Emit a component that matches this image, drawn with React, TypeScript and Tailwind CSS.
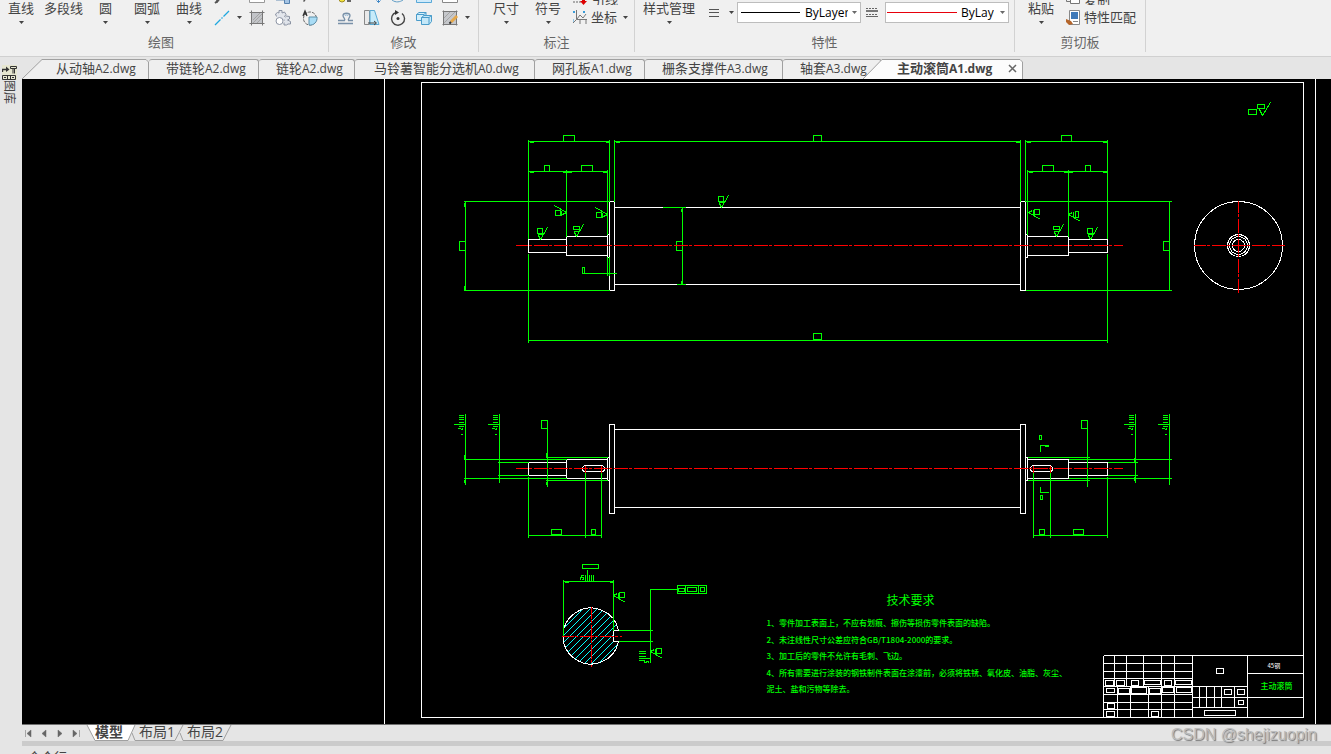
import React, { useState } from 'react';

type Box = [number, number, number, number];

const boxes = (list: Box[]) => list.map(([x1, y1, x2, y2]) => `M${x1} ${y1}H${x2}V${y2}H${x1}Z`).join('');

// ---- Drawing geometry, all in sheet units (1 unit = 1px at 100%) ----

const whiteBoxes: Box[] = [
    [421, 82, 1303, 717],
    // front view
    [609, 201, 614, 290],
    [1020, 201, 1025, 290],
    [614, 207, 1020, 284],
    [528, 239, 566, 252],
    [566, 236, 607, 255],
    [607, 234, 609, 257],
    [1025, 234, 1027, 257],
    [1027, 236, 1068, 255],
    [1068, 239, 1107, 252],
    // top view
    [609, 424, 614, 513],
    [1020, 424, 1025, 513],
    [614, 429, 1020, 507],
    [528, 462, 566, 475],
    [566, 459, 607, 478],
    [607, 457, 609, 480],
    [1025, 457, 1027, 480],
    [1027, 459, 1068, 478],
    [1068, 462, 1107, 475],
    // title block cells
    [1105, 680, 1113, 685],
    [1116, 680, 1124, 685],
    [1131, 680, 1138, 685],
    [1144, 680, 1160, 684],
    [1164, 680, 1171, 685],
    [1175, 680, 1191, 684],
    [1106, 688, 1114, 692],
    [1118, 688, 1129, 693],
    [1131, 687, 1146, 693],
    [1149, 688, 1160, 693],
    [1162, 687, 1173, 692],
    [1176, 687, 1191, 692],
    [1107, 703, 1114, 708],
    [1106, 711, 1114, 716],
    [1151, 711, 1158, 716],
    [1216, 668, 1223, 673],
    [1224, 689, 1231, 694],
    [1237, 689, 1244, 694],
    [1238, 700, 1243, 704],
    [1204, 710, 1235, 715],
];

const titleBlock =
    'M1103 655H1303M1103 655V717M1192 655V717M1247 655V717' +
    'M1103 663H1192M1103 671H1192M1103 678H1192M1103 686H1247M1103 694H1192M1103 702H1192M1103 709H1192' +
    'M1114 655V686M1126 655V686M1143 655V686M1161 655V717M1174 655V717' +
    'M1117 686V717M1130 686V717M1148 686V717' +
    'M1192 697H1303M1192 707H1247M1199 686V707M1206 686V707M1214 686V707M1221 686V707M1234 686V707' +
    'M1247 673H1303';

const greenBoxes: Box[] = [
    [563, 135, 574, 141],
    [813, 135, 821, 141],
    [1061, 135, 1071, 141],
    [544, 165, 549, 171],
    [581, 165, 592, 171],
    [1042, 165, 1053, 171],
    [1085, 165, 1090, 171],
    [459, 241, 465, 250],
    [676, 241, 682, 250],
    [1163, 241, 1169, 250],
    [582, 267, 584, 273],
    [813, 333, 821, 339],
    [541, 420, 547, 428],
    [1081, 420, 1087, 428],
    [551, 529, 561, 534],
    [591, 529, 595, 534],
    [1039, 529, 1044, 534],
    [1073, 529, 1083, 534],
    [1039, 435, 1041, 439],
    [1040, 495, 1042, 499],
    [582, 564, 598, 568],
    [677, 585, 706, 593],
    [678, 588, 684, 591],
    [687, 587, 696, 591],
    [700, 587, 704, 591],
    [1248, 109, 1256, 114],
    [1257, 104, 1264, 108],
];

const dimensions =
    // front view
    'M528 139V238M528 253V342M609 139V201M614 139V201M528 141H609M614 141H1020' +
    'M566 169V236M607 169V234M528 171H607' +
    'M463 201H609M463 290H609M465 201V290' +
    'M607 256V275M609 256V275M582 273H616' +
    'M662 207H685M676 284H685M682 207V284' +
    'M528 340H1107' +
    'M1020 139V201M1025 139V201M1107 139V238M1107 253V342M1025 141H1107' +
    'M1027 169V234M1068 169V236M1027 171H1107' +
    'M1025 201H1171M1025 290H1171M1169 201V290' +
    // top view, left side
    'M465 413V484M499 413V482M547 420V486' +
    'M463 459H566M463 478H566M497 462H528M497 475H528M545 457H607M545 480H607' +
    'M528 476V537M585 472V537M601 472V537M528 535H601' +
    // top view, right side
    'M1135 413V482M1169 413V484M1087 420V486' +
    'M1068 459H1171M1068 478H1171M1107 462H1137M1107 475H1137M1027 457H1089M1027 480H1089' +
    'M1107 476V537M1033 472V537M1050 472V537M1033 535H1107' +
    'M1040 451V445H1048M1044 446H1048M1040 486V492H1048' +
    // section
    'M563 579V636M613 579V630M563 581H613M587 569V581' +
    'M618 630H652M618 641H652M650 662V589H677M685 585V593M698 585V593' +
    'M585 574V581M589 574V581M591 574V581M593 574V581M580 576V579M583 575H581V577H583V579H581' +
    'M638 651H645M638 653H645M638 656H645M638 658H650M638 660H644V662H646V661H648V662' +
    // general roughness mark
    'M1259 109L1262 115L1270 102';

const arrowHeads =
    'M529 142H533M605 142H608M615 142H619M1015 142H1019M1026 142H1030M1102 142H1106' +
    'M529 172H533M562 172H571M602 172H606M1028 172H1032M1063 172H1072M1102 172H1106' +
    'M464 202V206M464 285V289M681 208V211M681 280V283' +
    'M464 454V458M464 479V482M546 452V456M546 481V484M1134 457V461M1134 476V480' +
    'M564 582H568M609 582H612';

// tolerance text collapsed to strokes, x is the dimension line
const Tolerance: React.FC<{ x: number }> = ({ x }) => (
    <path d={`M${x - 7} 415H${x - 2}M${x - 7} 417H${x - 2}M${x - 7} 419H${x - 2}M${x - 7} 422H${x - 2}M${x - 12} 424H${x}M${x - 7} 426H${x - 2}M${x - 7} 427V428H${x - 5}V427M${x - 5} 429H${x - 3}V427M${x - 5} 434H${x - 3}`} />
);

// surface roughness mark, tip at x,y
const Roughness: React.FC<{ x: number; y: number; turn?: number; wide?: boolean }> = ({ x, y, turn = 0, wide }) => (
    <g transform={`translate(${x} ${y}) rotate(${turn})`}>
        {wide ? (
            <path d="M-3 -10H3V-7H-3ZM-3 -5H3M-2 -4L0 0L7 -12" />
        ) : (
            <path d="M-3 -11H2V-6H-3ZM-3 -5H2M-2 -4L0 0L7 -12" />
        )}
    </g>
);

const hatch = Array.from({ length: 18 }, (_, i) => 1170 + i * 7)
    .map(c => `M${c - 600} 600L${c - 670} 670`)
    .join('');

const notes = [
    { y: 625, text: '1、零件加工表面上，不应有划痕、擦伤等损伤零件表面的缺陷。' },
    { y: 642, text: '2、未注线性尺寸公差应符合GB/T1804-2000的要求。' },
    { y: 658, text: '3、加工后的零件不允许有毛刺、飞边。' },
    { y: 675, text: '4、所有需要进行涂装的钢铁制件表面在涂漆前，必须将铁锈、氧化皮、油脂、灰尘、' },
    { y: 691, text: '泥土、盐和污物等除去。' },
];

const Drawing: React.FC = () => (
    <svg viewBox="21.5 78.5 1309 645" preserveAspectRatio="xMinYMin meet" className="block w-full h-full bg-black" fill="none" strokeWidth="1" shapeRendering="crispEdges">
        <defs>
            <clipPath id="section">
                <path d="M591 608A28 28 0 0 1 618 630H613V641H618A28 28 0 1 1 591 608Z" />
            </clipPath>
        </defs>

        <g stroke="#fff">
            <path d="M384 78V725M1315 78V725" />
            <path d={boxes(whiteBoxes)} />
            <path d={titleBlock} />
            <circle cx="1238" cy="245" r="44" />
            <circle cx="1238" cy="245" r="11" />
            <circle cx="1238" cy="245" r="9" />
            <circle cx="1238" cy="245" r="6" />
            <rect x="582" y="465" width="22" height="6" rx="3" />
            <rect x="1030" y="465" width="22" height="6" rx="3" />
        </g>

        <path d={hatch} stroke="#0ff" clipPath="url(#section)" />
        <path d="M618 630H613V641H618A28 28 0 1 1 618 630" stroke="#fff" />

        <g stroke="#0f0">
            <path d={dimensions} />
            <path d={arrowHeads} />
            <path d={boxes(greenBoxes)} />
            <Tolerance x={465} />
            <Tolerance x={499} />
            <Tolerance x={1135} />
            <Tolerance x={1169} />
            <Roughness x={540} y={239} />
            <Roughness x={576} y={236} wide />
            <Roughness x={721} y={207} />
            <Roughness x={1056} y={236} wide />
            <Roughness x={1090} y={239} />
            <Roughness x={566} y={212} turn={-90} />
            <Roughness x={607} y={214} turn={-90} />
            <Roughness x={1028} y={212} turn={90} />
            <Roughness x={1068} y={214} turn={90} wide />
            <Roughness x={613} y={595} turn={90} />
            <Roughness x={650} y={651} turn={90} />
        </g>

        <g stroke="#f00" strokeDasharray="14 1 3 2" strokeDashoffset="2">
            <path d="M515 245H1122M515 468H1122" />
            <path d="M1193 245H1284M1238 200V292" />
            <path d="M561 636H621M591 606V666" />
            <path d="M585 465V472M601 465V472M1033 465V472M1050 465V472" strokeDasharray="none" />
        </g>

        <g fill="#0f0" className="font-['Noto_Sans_CJK_SC',sans-serif]">
            <text x="886" y="604" fontSize="12">技术要求</text>
            {notes.map(n => (
                <text key={n.y} x="766" y={n.y} fontSize="8" fontWeight="500">{n.text}</text>
            ))}
            <text x="1260" y="688" fontSize="8" fontWeight="500">主动滚筒</text>
            <text x="1267" y="667" fontSize="6" fill="#fff">45钢</text>
        </g>
    </svg>
);

// ---- Ribbon ----

const Caret: React.FC<{ className?: string }> = ({ className = '' }) => (
    <svg width="5" height="3" viewBox="0 0 5 3" className={className} aria-hidden="true">
        <path d="M0 0H5L2.5 3Z" fill="#444" />
    </svg>
);

const BigButton: React.FC<{ label: string; className?: string; caret?: boolean }> = ({ label, className = '', caret = true }) => (
    <button className={`flex flex-col items-center shrink-0 whitespace-nowrap leading-4 ${className}`}>
        {label}
        {caret && <Caret className="mt-[5px]" />}
    </button>
);

const Group: React.FC<{ title: string; className: string; children: React.ReactNode }> = ({ title, className, children }) => (
    <section className={`flex flex-col shrink-0 h-[52px] border-r border-[#d2d2d2] ${className}`}>
        <div className="flex h-[34px]">{children}</div>
        <h2 className="text-center leading-4 text-[#666]">{title}</h2>
    </section>
);

const DrawIcons = () => (
    <svg width="108" height="28" viewBox="213 0 108 28" fill="none" stroke="#555" className="ml-[11px]" aria-hidden="true">
        <path d="M215 3L219 0M216 1L218 2" strokeWidth="2" />
        <path d="M249.500 -4V2.500H264.500V-4" fill="#fff" stroke="#999" />
        <path d="M276 0H284" stroke="#6a8fb5" />
        <path d="M284.500 -3V3.500H289.500V-3Z" fill="#a5c4e4" stroke="#5580ad" />
        <path d="M305 0L303.500 1.500" strokeWidth="1.500" />
        <path d="M215 25L220.500 19.500M221.500 18.500L222.500 17.500M223.500 16.500L229 11" stroke="#1ea7e0" strokeWidth="1.300" />
        <path d="M237 16H242L239.500 19Z" fill="#444" stroke="none" />
        <path d="M252 13H262V23H252Z" fill="#c2c4c8" stroke="none" />
        <path d="M249.500 12.500H264.500M249.500 23.500H264.500M251.500 10.500V25.500M262.500 10.500V25.500" stroke="#777" />
        <path d="M253 20L260 13M253 23L262 14M257 23L262 18" stroke="#a4a4a4" />
        <path d="M276.500 16.500L275.500 14L277.500 12.500L279 13V10.500H282V13L284.500 12L286 14.500L284.500 16.500L287 18L286 20.500L283.500 20" stroke="#8b93a3" fill="#e3e6ec" />
        <circle cx="279.500" cy="21" r="3.500" stroke="#8b93a3" fill="#fff" />
        <path d="M286 16L289.500 16.500V19L287.500 20L290.500 21.500V24H288L286.500 25H284V22.500" stroke="#8b93a3" fill="#dfe3ea" />
        <circle cx="310" cy="18.500" r="6.500" stroke="#666" strokeDasharray="3 1" />
        <path d="M309 17H317A7 7 0 0 1 309 25Z" fill="#a9dcf5" stroke="#5e8fa8" />
        <path d="M303 16L305 11L307 16M304 14H306" stroke="#333" strokeWidth="1.300" />
    </svg>
);

const ModifyIcons = () => (
    <svg width="140" height="28" viewBox="335 0 140 28" fill="none" stroke="#555" className="ml-[6px]" aria-hidden="true">
        <circle cx="342" cy="-1" r="3" fill="#f5e63c" stroke="#a08c20" />
        <path d="M347 -2H351V2H347Z" fill="#666" stroke="none" />
        <path d="M378.500 -1V2.500M376.500 .5L378.500 2.500L380.500 .5" stroke="#3e86c6" />
        <path d="M392 0C396 3 400 2 403 0" stroke="#5f9cc5" />
        <path d="M416.500 -3V2.500H431.500V-3" fill="#cfeafa" stroke="#5aa9d8" />
        <path d="M442.500 -3V2.500H457.500V-3" fill="#fff" stroke="#888" />
        <path d="M338 23.500H353M338 20.500H344.500C346 19 343 18 343 15.500C343 12.500 350 12.500 350 15.500C350 18 347.500 18.500 348.500 20.500H353" stroke="#7890a8" strokeWidth="1.300" />
        <path d="M345 16C345 14.500 348 14.500 348 16" stroke="#8eb7d8" />
        <path d="M364.500 10.500H369.500V24.500H364.500Z" fill="#e9e9e9" stroke="#888" />
        <path d="M370 10.500H374.500L379 24.500H370Z" fill="#c6ebfa" stroke="#59a9d3" />
        <path d="M368 23H376M374 21L376.500 23L374 25" stroke="#444" />
        <path d="M396 12.500A6.500 6.500 0 1 0 402 13.500" stroke="#444" strokeWidth="1.400" />
        <path d="M395 10L399 12.500L395 15Z" fill="#333" stroke="none" />
        <circle cx="398" cy="18.500" r="1.500" fill="#333" stroke="none" />
        <path d="M416.500 14.500L419 12.500H426V18.500L424 20.500H416.500ZM416.500 14.500H424V20.500M424 14.500L426 12.500" fill="#d3effb" stroke="#4a9cca" />
        <path d="M421.500 17.500L424 15.500H431.500V21.500L429 24.500H421.500ZM421.500 17.500H429V24.500M429 17.500L431.500 15.500" fill="#c5e8f8" stroke="#4a9cca" />
        <path d="M444 12H456V24H444Z" fill="#c5c7cb" stroke="none" />
        <path d="M442.500 11.500H457.500M442.500 24.500H457.500M443.500 10.500V25.500M456.500 10.500V25.500" stroke="#777" />
        <path d="M444 18L450 12M444 23L455 12M449 24L456 17" stroke="#a4a4a4" />
        <path d="M451 22L457 16" stroke="#e5a84c" strokeWidth="3" />
        <path d="M449.500 23.500L451 22" stroke="#333" strokeWidth="2" />
        <path d="M465 16H470L467.500 19Z" fill="#444" stroke="none" />
    </svg>
);

const Ribbon = () => (
    <header className="flex h-[57px] shrink-0 overflow-hidden border-b border-[#d0d0d0] bg-[#f0f0f0]">
        <Group title="绘图" className="w-[329px] [&>h2]:pr-1.5">
            <BigButton label="直线" className="ml-2" />
            <BigButton label="多段线" className="ml-[10px]" caret={false} />
            <BigButton label="圆" className="ml-4" />
            <BigButton label="圆弧" className="ml-[22px]" />
            <BigButton label="曲线" className="ml-4" />
            <DrawIcons />
        </Group>
        <Group title="修改" className="w-[150px]">
            <ModifyIcons />
        </Group>
        <Group title="标注" className="w-[156px]">
            <BigButton label="尺寸" className="ml-[14px]" />
            <BigButton label="符号" className="ml-4" />
            <div className="ml-3 flex flex-col">
                <button className="flex h-[5px] items-end gap-[5px] overflow-hidden leading-3">
                    <svg width="14" height="9" viewBox="573 -5 14 9" className="shrink-0" aria-hidden="true">
                        <path d="M573 1H581" stroke="#666" strokeDasharray="2 1" />
                        <path d="M582 -2V0H580L583.500 4L587 0H585V-2Z" fill="#d00" />
                    </svg>
                    引线
                </button>
                <button className="mt-1 flex items-center gap-1 leading-4">
                    <svg width="14" height="14" viewBox="0 0 14 14" fill="none" aria-hidden="true">
                        <path d="M3.500 0V9.500H14M3.500 9.500L0 13M7 9V14M13 9V14" stroke="#777" />
                        <path d="M0 1L2 3M2 1L0 3M10 1L12 3M12 1L10 3M0 9V12" stroke="#3a9bd6" />
                        <path d="M4 9L7 5L10 8L13 4" stroke="#777" />
                    </svg>
                    坐标
                    <Caret className="ml-0.5" />
                </button>
            </div>
        </Group>
        <Group title="特性" className="w-[380px]">
            <BigButton label="样式管理" className="ml-2" />
            <button aria-label="线型" className="ml-[14px] mt-[8px] flex h-[9px] items-center gap-[10px]">
                <svg width="10" height="9" viewBox="0 0 10 9" aria-hidden="true">
                    <path d="M0 1.500H10M0 4.500H10M0 8.500H10" stroke="#555" />
                </svg>
                <Caret />
            </button>
            <div className="relative ml-[3px] mt-0.5 h-[21px] w-[124px]">
                <select aria-label="线型" className="h-full w-full appearance-none border border-[#bdbdbd] bg-white pl-[67px] pr-3 font-['Open_Sans',sans-serif] text-xs text-black">
                    <option>ByLayer</option>
                </select>
                <span className="absolute left-1 top-[10px] h-px w-[59px] bg-black" />
                <Caret className="absolute right-1 top-[9px] opacity-80" />
            </div>
            <svg width="12" height="9" viewBox="0 0 12 9" className="ml-[5px] mt-[8px]" aria-hidden="true">
                <path d="M0 .5H12M0 6.500H12" stroke="#666" strokeDasharray="2 1" />
                <path d="M0 3H12" stroke="#777" strokeWidth="2" />
                <path d="M0 8.500H12" stroke="#666" />
            </svg>
            <div className="relative ml-[7px] mt-0.5 h-[21px] w-[124px]">
                <select aria-label="线宽" className="h-full w-full appearance-none border border-[#bdbdbd] bg-white pl-[75px] pr-[14px] font-['Open_Sans',sans-serif] text-xs text-black">
                    <option>ByLayer</option>
                </select>
                <span className="absolute left-0.5 top-[10px] h-px w-[70px] bg-red-600" />
                <Caret className="absolute right-1 top-[9px] opacity-80" />
            </div>
        </Group>
        <Group title="剪切板" className="w-[131px]">
            <BigButton label="粘贴" className="ml-[13px]" />
            <div className="ml-3 flex flex-col">
                <button className="flex h-[5px] items-end gap-1 overflow-hidden leading-3">
                    <svg width="14" height="9" viewBox="0 0 14 9" className="shrink-0" aria-hidden="true">
                        <path d="M4.500 0V7.500H13.500V0" fill="#fff" stroke="#777" />
                        <path d="M.5 0V5.500H4" fill="none" stroke="#777" />
                    </svg>
                    复制
                </button>
                <button className="mt-1 flex items-center gap-1 whitespace-nowrap leading-4">
                    <svg width="14" height="15" viewBox="0 0 14 15" aria-hidden="true">
                        <path d="M3.500 .5H13.500V14.500H3.500Z" fill="#fff" stroke="#888" />
                        <path d="M5 2H12V9H5Z" fill="#3f79b8" />
                        <path d="M7 11.500H12" stroke="#888" />
                        <path d="M0 9L5 11L7 14L3 15L0 12Z" fill="#b5652a" />
                    </svg>
                    特性匹配
                </button>
            </div>
        </Group>
    </header>
);

// ---- File tabs ----

const files = [
    { id: 'f1', name: '从动轴', ext: 'A2.dwg', width: 'w-[127px] pl-[34px]' },
    { id: 'f2', name: '带链轮', ext: 'A2.dwg', width: 'w-[110px] pl-[17px]' },
    { id: 'f3', name: '链轮', ext: 'A2.dwg', width: 'w-[96px] pl-[17px]' },
    { id: 'f4', name: '马铃薯智能分选机', ext: 'A0.dwg', width: 'w-[180px] pl-[19px]' },
    { id: 'f5', name: '网孔板', ext: 'A1.dwg', width: 'w-[110px] pl-[17px]' },
    { id: 'f6', name: '栅条支撑件', ext: 'A3.dwg', width: 'w-[138px] pl-[17px]' },
    { id: 'f7', name: '轴套', ext: 'A3.dwg', width: 'w-[99px] pl-[17px]' },
];

const FileTabs = () => (
    <nav className="flex h-[22px] shrink-0 items-end bg-[#e5e5e5]">
        {files.map((f, i) => (
            <button
                key={f.id}
                className={`relative flex h-5 shrink-0 items-center whitespace-nowrap pb-px ${i === 0 ? '' : 'rounded-t-[3px] border-t border-r border-[#a0a0a0] bg-[#efefef]'} ${f.width}`}
            >
                {i === 0 && (
                    <svg viewBox="0 0 127 20" className="absolute inset-0 h-full w-full" aria-hidden="true">
                        <path d="M0 20L20 .5H124L126.500 3V20" fill="#efefef" stroke="#a0a0a0" />
                    </svg>
                )}
                <span className="relative">{f.name}<span className="text-xs">{f.ext}</span></span>
            </button>
        ))}
        <div className="relative -ml-[19px] flex h-5 w-[160px] shrink-0 items-center pb-px pl-[34px]">
            <svg viewBox="0 0 160 20" className="absolute inset-0 h-full w-full" aria-hidden="true">
                <path d="M0 20L19 .5H157L159.500 3V20" fill="#fcfcfc" stroke="#a0a0a0" />
            </svg>
            <button className="relative whitespace-nowrap font-bold">主动滚筒<span className="text-xs">A1.dwg</span></button>
            <button aria-label="关闭" className="relative ml-auto mr-[6px]">
                <svg width="9" height="9" viewBox="0 0 9 9" aria-hidden="true">
                    <path d="M1 1L8 8M8 1L1 8" stroke="#666" strokeWidth="1.500" />
                </svg>
            </button>
        </div>
    </nav>
);

// ---- Layout tabs ----

const LayoutTabs = () => {
    const [active, setActive] = useState('模型');

    return (
        <nav className="flex h-[17px] shrink-0 items-start border-t border-[#707070] bg-[#e5e5e5]">
            <div className="flex gap-2 pl-[2px] pt-1">
                {[
                    { id: '首页', d: 'M1.500 1V8M7 1V8L3 4.500Z' },
                    { id: '上一页', d: 'M6 1V8L2 4.500Z' },
                    { id: '下一页', d: 'M2 1V8L6 4.500Z' },
                    { id: '末页', d: 'M1 1V8L5 4.500ZM7.500 1V8' },
                ].map(n => (
                    <button key={n.id} aria-label={n.id}>
                        <svg width="8" height="9" viewBox="0 0 8 9" aria-hidden="true">
                            <path d={n.d} fill="#666" stroke="#666" strokeWidth=".5" />
                        </svg>
                    </button>
                ))}
            </div>
            <div className="ml-[5px] flex text-sm leading-[14px]">
                {['模型', '布局1', '布局2'].map(name => (
                    <button
                        key={name}
                        onClick={() => setActive(name)}
                        className={`relative flex h-4 w-12 items-center justify-center whitespace-nowrap pb-0.5 ${active === name ? 'z-10 font-bold' : ''}`}
                    >
                        <svg viewBox="0 0 48 16" className="absolute inset-0 h-full w-full overflow-visible" aria-hidden="true">
                            {active === name ? (
                                <path d="M2 0L10 15.500H43L50 0" fill="#fff" stroke="#a0a0a0" />
                            ) : (
                                <path d="M-1 8L2 15.500H42L50 0" fill="none" stroke="#a0a0a0" />
                            )}
                        </svg>
                        <span className="relative">{name}</span>
                    </button>
                ))}
            </div>
        </nav>
    );
};

export default function App() {
    return (
        <div className="relative flex h-screen flex-col overflow-hidden bg-[#e5e5e5] font-['Open_Sans','Noto_Sans_CJK_SC',sans-serif] text-[13px] text-[#444]">
            <Ribbon />
            <div className="flex min-h-0 flex-1">
                {/* Collapsed library palette */}
                <aside className="flex w-[22px] shrink-0 flex-col pl-0.5 pt-2">
                    <button className="flex flex-col items-start">
                        <svg width="15" height="15" viewBox="0 0 15 15" fill="none" stroke="#333" className="bg-[#e6e6d0]" aria-hidden="true">
                            <path d="M.5 7V4.500H5" strokeWidth="1.300" />
                            <path d="M4 1.500L7.500 4.500L4 7Z" fill="#333" stroke="none" />
                            <path d="M8.500 1.500H14.500V3.500H8.500ZM11 4V8.500M12.500 4V8.500" />
                            <path d="M.5 10.500H13.500V14.500H.5ZM5.500 10.500V14.500M8.500 10.500V14.500M2 12.500H4M10 12.500H12" />
                        </svg>
                        <span className="text-xs leading-[14px] [text-orientation:sideways] [writing-mode:vertical-rl]">图库</span>
                    </button>
                </aside>
                <div className="flex min-w-0 flex-1 flex-col">
                    <FileTabs />
                    <main className="min-h-0 flex-1">
                        <Drawing />
                    </main>
                    <LayoutTabs />
                    <div className="h-[5px] shrink-0 bg-[#cbcbcb]" />
                    <div className="h-2 shrink-0 overflow-hidden pl-[6px] pt-[3px] leading-4">命令行</div>
                </div>
            </div>
            <div className="absolute bottom-[9px] right-[14px] font-['Liberation_Sans',sans-serif] text-base leading-5 text-[#bcbcbc] [text-shadow:1px_1px_1px_#777]">
                CSDN @shejizuopin
            </div>
        </div>
    );
}
